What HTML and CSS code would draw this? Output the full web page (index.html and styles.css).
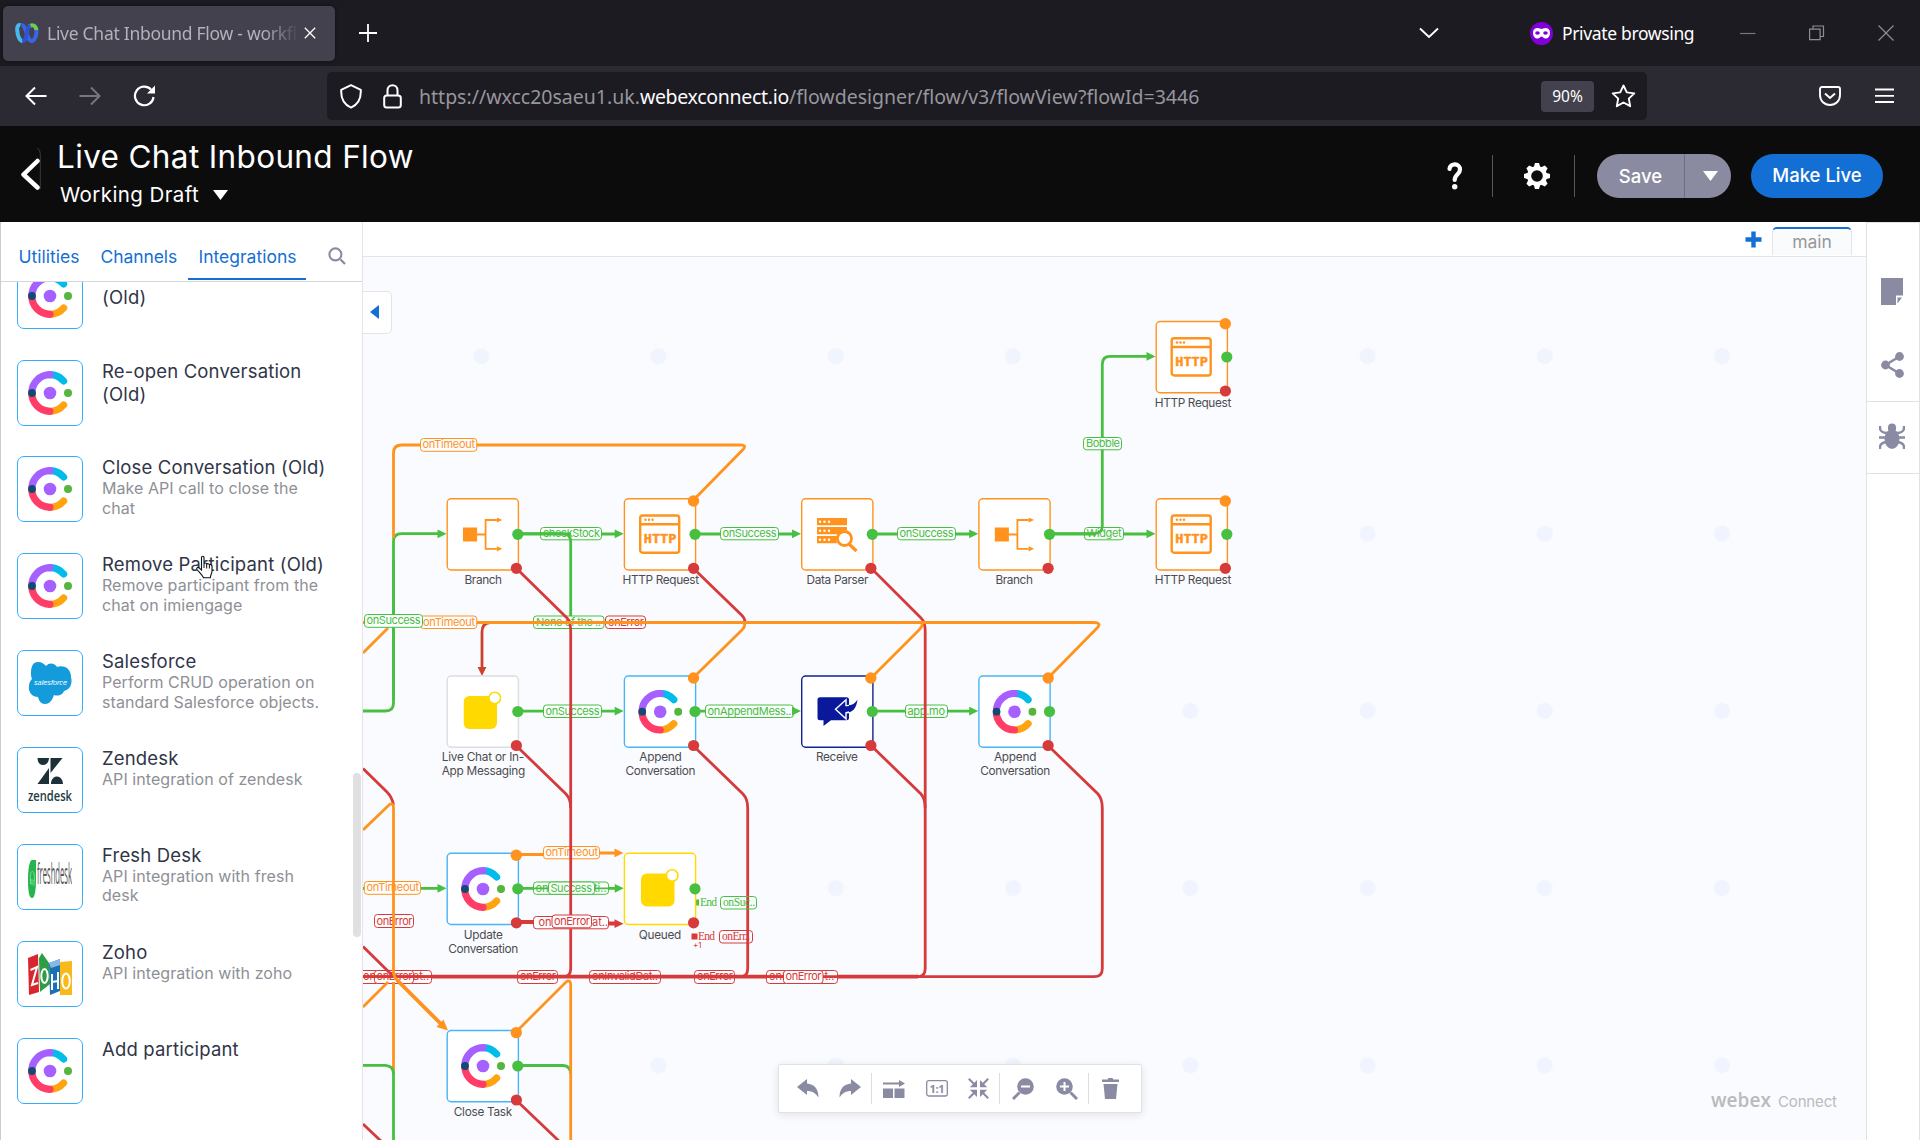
FILE: index.html
```html
<!DOCTYPE html>
<html lang="en">
<head>
<meta charset="utf-8">
<title>Live Chat Inbound Flow - workflow</title>
<link rel="stylesheet" href="styles.css">
</head>
<body>
<svg class="defs" width="0" height="0">
  <symbol id="cc" viewBox="0 0 44 44">
    <g fill="none" stroke-width="7.2" stroke-linecap="round">
      <path stroke="#00bceb" d="M22 3.7A18.3 18.3 0 0 1 35.6 10"/>
      <path stroke="#ffa30f" d="M22 40.3A18.3 18.3 0 0 0 35.6 34"/>
      <path stroke="#a560ff" d="M3.8 22A18.3 18.3 0 0 1 22 3.7"/>
      <path stroke="#ff3d67" d="M3.8 22A18.3 18.3 0 0 0 22 40.3"/>
    </g>
    <circle cx="4" cy="22" r="3.9" fill="#124a72"/><circle cx="22" cy="22" r="6.3" fill="#a560ff"/><circle cx="40" cy="22" r="4" fill="#55b53c"/>
  </symbol>
  <symbol id="http" viewBox="0 0 44 42">
    <rect x="2.2" y="1.8" width="39" height="37.2" rx="2.5" fill="none" stroke="#ff931e" stroke-width="2.4"/>
    <path d="M2 10.5H41" stroke="#ff931e" stroke-width="2.4"/>
    <g fill="#ff931e"><circle cx="7.5" cy="6" r="1.2"/><circle cx="11" cy="6" r="1.2"/><circle cx="14.5" cy="6" r="1.2"/></g>
    <text x="5.8" y="29.2" class="http-text" textLength="32.5" lengthAdjust="spacingAndGlyphs">HTTP</text>
  </symbol>
  <symbol id="branch" viewBox="0 0 40 34">
    <path d="M0 9.5h14.3v14H0z" fill="#ff931e"/>
    <path d="M14 16.5h8.5M34 2H22.8v28.8H34" fill="none" stroke="#ff931e" stroke-width="1.8"/>
    <path d="M34-.6l5.5 2.6L34 4.6zM34 28.2l5.5 2.6-5.5 2.6z" fill="#ff931e"/>
  </symbol>
  <symbol id="yellow" viewBox="0 0 40 40">
    <rect x="0" y="5" width="33.5" height="33" rx="6" fill="#ffd900"/><circle cx="31.2" cy="7" r="5.8" fill="#fff" stroke="#ffd900" stroke-width="1.6"/>
  </symbol>
  <symbol id="down" viewBox="0 0 15 10"><path d="M0 0h15L7.5 10z" fill="#fff"/></symbol>
  <symbol id="ports" viewBox="0 0 90 90" overflow="visible"><circle cx="70.6" cy="35.5" r="5.6" fill="#47bf40"/><circle cx="69.2" cy="69.5" r="5.6" fill="#d73a3a"/></symbol>
</svg>

<div class="tabstrip">
  <div class="tab">
    <svg width="24" height="20" viewBox="0 0 24 20"><g fill="none" stroke-width="4"><path stroke="#45b9ee" d="M5.500 2.200C3 1.500 2 3.500 2.200 7c.3 6 2.500 11 5.300 11"/><path stroke="#6fca5d" d="M14 3.500c3-2.500 7-1.500 7.500 4"/><path stroke="#3a65e8" d="M21.500 7c.3 6-2 11-5 11-4.500 0-5-16-10-16"/><path stroke="#2f52d8" d="M7.500 18c3.500 0 4-5 4.500-9 .4-3 1.300-5.500 3.500-6.500"/></g></svg>
    <span class="tab-title">Live Chat Inbound Flow - workfl</span>
    <svg class="tab-x" width="12" height="12" viewBox="0 0 12 12"><path d="M.8.8l10.400 10.400M11.200.8L.8 11.200" stroke="#fff" stroke-width="1.300"/></svg>
  </div>
  <svg class="newtab" width="18" height="18" viewBox="0 0 18 18"><path d="M9 0v18M0 9h18" stroke="#fff" stroke-width="1.800"/></svg>
  <svg class="tab-list" width="20" height="12" viewBox="0 0 20 12"><path d="M1 1.500l9 8.500 9-8.500" fill="none" stroke="#fff" stroke-width="1.900"/></svg>
  <div class="private">
    <svg width="23" height="23" viewBox="0 0 23 23"><circle cx="11.500" cy="11.500" r="11.500" fill="#8000d7"/><path d="M3 10.500c0-3 2-4.500 4.500-4.500 2 0 3 1 4 1s2-1 4-1c2.500 0 4.500 1.500 4.500 4.500 0 4-2 6-4.500 6-2 0-3-2-4-2s-2 2-4 2c-2.500 0-4.500-2-4.500-6z" fill="#fff"/><ellipse cx="7.500" cy="11" rx="2.300" ry="1.700" fill="#8000d7"/><ellipse cx="15.500" cy="11" rx="2.300" ry="1.700" fill="#8000d7"/></svg>
    <span>Private browsing</span>
  </div>
  <div class="win-buttons">
    <svg width="16" height="16" viewBox="0 0 16 16"><path d="M0 8.500h15.500" stroke="#77767c" stroke-width="1.200"/></svg>
    <svg width="16" height="16" viewBox="0 0 16 16"><path d="M.6 4.200h10.500v10.500H.6zM4 4V1h10.500v10.500h-3" fill="none" stroke="#8f8e94" stroke-width="1.200"/></svg>
    <svg width="16" height="16" viewBox="0 0 16 16"><path d="M.5.500l15 15M15.500.500l-15 15" stroke="#8f8e94" stroke-width="1.200"/></svg>
  </div>
</div>

<div class="navbar">
  <div class="nav-buttons">
    <svg width="22" height="20" viewBox="0 0 22 20"><path d="M21.500 10H1.500M10 1.500L1.500 10l8.500 8.500" fill="none" stroke="#fff" stroke-width="2"/></svg>
    <svg width="22" height="20" viewBox="0 0 22 20"><path d="M.5 10h20M12 1.500l8.500 8.500-8.500 8.500" fill="none" stroke="#77767e" stroke-width="2"/></svg>
    <svg width="23" height="22" viewBox="0 0 23 22"><path d="M20.500 12a9.300 9.300 0 1 1-2.500-7.500" fill="none" stroke="#fff" stroke-width="2.200"/><path d="M22 .5v8h-8z" fill="#fff"/></svg>
  </div>
  <div class="urlbar">
    <svg class="shield" width="22" height="25" viewBox="0 0 22 25"><path d="M11 1.200l9.800 4.600c.4 8.500-3 15-9.800 17.800C4.200 20.800.8 14.300 1.200 5.800z" fill="none" stroke="#fff" stroke-width="2" stroke-linejoin="round"/></svg>
    <svg class="lock" width="19" height="25" viewBox="0 0 19 25"><rect x="1.200" y="11.500" width="16.600" height="12" rx="2.500" fill="none" stroke="#fff" stroke-width="2"/><path d="M4.500 11V6.500c0-7 10-7 10 0V11" fill="none" stroke="#fff" stroke-width="2"/></svg>
    <span class="url">https://wxcc20saeu1.uk.<b>webexconnect.io</b>/flowdesigner/flow/v3/flowView?flowId=3446</span>
    <span class="zoom">90%</span>
    <svg class="star" width="25" height="24" viewBox="0 0 25 24"><path d="M12.500 1.500l3.300 6.900 7.500 1-5.500 5.200 1.400 7.600-6.700-3.700-6.700 3.700 1.400-7.600L1.700 9.400l7.500-1z" fill="none" stroke="#fff" stroke-width="1.900" stroke-linejoin="round"/></svg>
  </div>
  <svg class="pocket" width="22" height="20" viewBox="0 0 22 20"><path d="M3 1h16c1.200 0 2 .8 2 2v6c0 6-4.500 10-10 10S1 15 1 9V3c0-1.200.8-2 2-2z" fill="none" stroke="#fff" stroke-width="1.900"/><path d="M6 7.500l5 4.500 5-4.500" fill="none" stroke="#fff" stroke-width="2"/></svg>
  <svg class="burger" width="19" height="16" viewBox="0 0 19 16"><path d="M0 1.500h19M0 7.800h19M0 14h19" stroke="#fff" stroke-width="1.800"/></svg>
</div>

<header class="app-header">
  <svg class="back" width="21" height="42" viewBox="0 0 21 42"><path d="M17 0q3.300 1 3.300 6v35" fill="none" stroke="#3a3a3a"/><path d="M17.500 13L3.500 26.500l14 13" fill="none" stroke="#fff" stroke-width="4.500" stroke-linecap="round" stroke-linejoin="round"/></svg>
  <div class="titles">
    <h1>Live Chat Inbound Flow</h1>
    <div class="draft"><span>Working Draft</span><svg width="15" height="10"><use href="#down"/></svg></div>
  </div>
  <div class="actions">
    <span class="help"><svg width="16" height="28" viewBox="0 0 16 28"><path d="M2.500 7C3 .8 13 .8 13 7.500c0 5-5.300 4.500-5.300 10.500" fill="none" stroke="#fff" stroke-width="4.200" stroke-linecap="round"/><circle cx="7.700" cy="24.800" r="2.700" fill="#fff"/></svg></span>
    <span class="gear"><svg width="26" height="26" viewBox="-13 -13 26 26"><g fill="#fff"><path id="tooth" d="M-2-13h4l1.200 4v18L2 13h-4l-1.200-4V-9z"/><use href="#tooth" transform="rotate(45)"/><use href="#tooth" transform="rotate(90)"/><use href="#tooth" transform="rotate(135)"/><circle r="10"/></g><circle r="5.800" fill="#0c0c0c"/></svg></span>
    <div class="save"><span>Save</span><i><svg width="15" height="10"><use href="#down"/></svg></i></div>
    <div class="live">Make Live</div>
  </div>
</header>

<main>
  <aside class="sidebar">
    <nav class="side-tabs">
      <span class="t1">Utilities</span><span class="t2">Channels</span><span class="t3">Integrations</span>
      <svg width="18" height="18" viewBox="0 0 18 18"><circle cx="7.400" cy="7.400" r="6" fill="none" stroke="#8a8ba3" stroke-width="2.100"/><path d="M12.500 12.500l4.500 4.500" stroke="#8a8ba3" stroke-width="2.300"/></svg>
    </nav>
    <div class="list">
      <div class="item first"><div class="ico"><svg width="44" height="44"><use href="#cc"/></svg></div><div class="txt"><h3>(Old)</h3></div></div>
      <div class="item"><div class="ico"><svg width="44" height="44"><use href="#cc"/></svg></div><div class="txt"><h3>Re-open Conversation<br>(Old)</h3></div></div>
      <div class="item"><div class="ico"><svg width="44" height="44"><use href="#cc"/></svg></div><div class="txt"><h3>Close Conversation (Old)</h3><p>Make API call to close the<br>chat</p></div></div>
      <div class="item"><div class="ico"><svg width="44" height="44"><use href="#cc"/></svg></div><div class="txt"><h3>Remove Participant (Old)</h3><p>Remove participant from the<br>chat on imiengage</p></div></div>
      <div class="item"><div class="ico"><svg width="44" height="44" viewBox="0 0 44 44"><path d="M3 12C3 4 6 1 10 1c4 0 6 2 8 4 3-4 9-3 11 1 5-2 14 0 14 10 2 8-2 13-7 14-2 5-7 5-10 4-2 6-5 9-9 9s-6-3-7-7C4 36 0 31 1 25c0-4 2-6 3-7-1-2-1-4-1-6z" fill="#139bdc"/><text class="sf" x="6" y="23.500" textLength="33" lengthAdjust="spacingAndGlyphs">salesforce</text></svg></div><div class="txt"><h3>Salesforce</h3><p>Perform CRUD operation on<br>standard Salesforce objects.</p></div></div>
      <div class="item"><div class="ico"><svg width="44" height="44" viewBox="0 0 44 44"><path d="M9.500 0h11.500c0 4-2.500 7-6 7S9.500 4 9.500 0zM22.500 0h12L22.500 15zM21 10v16H9.500zM23 26c0-5 3-7.500 6-7.500s6 3 6 7.500z" fill="#1c3038"/><text class="zd" x="0" y="43" textLength="44" lengthAdjust="spacingAndGlyphs">zendesk</text></svg></div><div class="txt"><h3>Zendesk</h3><p>API integration of zendesk</p></div></div>
      <div class="item"><div class="ico"><svg width="44" height="44" viewBox="0 0 44 44"><path d="M8 5v18c0 12-1 20-4 20S0 36 0 24 2 5 4 5z" fill="#24b64e"/><path d="M2.300 26v-5c0-6 4-6 4 0v5M2.500 24v5h1.500v-5M6 25v5H4.500" fill="none" stroke="#8ee0a3" stroke-width=".8"/><text class="fd" transform="translate(9 28.500) scale(1 2.700)" textLength="35" lengthAdjust="spacingAndGlyphs">freshdesk</text></svg></div><div class="txt"><h3>Fresh Desk</h3><p>API integration with fresh<br>desk</p></div></div>
      <div class="item"><div class="ico"><svg width="44" height="44" viewBox="0 0 44 44"><path d="M0 6l10-4 1 38-10 3z" fill="#d9262e"/><path d="M11 6l3-5 7 10 1 21-10 8z" fill="#2e9e45"/><path d="M21 11l11-4v32l-10 4z" fill="#1c6eb5"/><path d="M21 11l11-4v6l-9 3z" fill="#86b9e4"/><path d="M32 10l12-1v34H32z" fill="#f9b91b"/><g fill="none" stroke="#fff" stroke-width="2"><path d="M2.500 18l6.500-3-5 18 6-2M24 22v16M30 20v17M24 30l6-1"/><ellipse cx="16.500" cy="24" rx="3.200" ry="7"/><ellipse cx="38" cy="29" rx="3.800" ry="7.500"/></g></svg></div><div class="txt"><h3>Zoho</h3><p>API integration with zoho</p></div></div>
      <div class="item"><div class="ico"><svg width="44" height="44"><use href="#cc"/></svg></div><div class="txt"><h3>Add participant</h3></div></div>
    </div>
    <div class="thumb"></div>
    <svg class="cursor" width="20" height="25" viewBox="0 0 20 25"><path d="M6.500 15V2.500C6.500.8 9 .8 9 2.500V9c.2-1.500 2.500-1.300 2.700.3.500-1 2.500-.9 2.700.7.500-.9 2.600-.5 2.600 1.300v5c0 2-1.500 3.500-1.700 6.500H8.500C7.500 20.500 4 17 2 14.500c-1-1.500.7-2.700 2-1.700z" fill="#fff" stroke="#111" stroke-width="1.100"/><path d="M9 9v4M11.700 9.500v4M14.400 10.500v3" stroke="#111"/></svg>
  </aside>

  <section class="work">
    <div class="flow-tabs">
      <svg width="17" height="17" viewBox="0 0 17 17"><path d="M6.300.500h4.400v5.800h5.800v4.400h-5.800v5.800H6.300v-5.800H.500V6.300h5.800z" fill="#136fd3"/></svg>
      <span class="main-tab">main</span>
    </div>
    <div class="canvas">
      <svg class="flow" width="1503" height="883" viewBox="363 257 1503 883">
        <defs>
          <pattern id="dots" patternUnits="userSpaceOnUse" x="392.700" y="267.600" width="177.250" height="177.300"><circle cx="88.600" cy="88.600" r="8" fill="#f0f4fe"/></pattern>
        </defs>
        <rect x="363" y="257" width="1503" height="883" fill="url(#dots)"/>
        <g class="lab g">
          <rect x="533.500" y="616" width="70.500" height="12.500" rx="3"/><text x="536" y="626" textLength="65">None of the ..</text>
        </g>
        <g class="lab r">
          <rect x="605.500" y="616" width="40" height="12.500" rx="3"/><text x="608" y="626" textLength="36">onError</text>
          <rect x="374.500" y="914.500" width="39" height="13" rx="3"/><text x="376.500" y="924.500" textLength="36">onError</text>
          <rect x="350" y="970.500" width="81.500" height="13" rx="3"/><text x="363" y="980.300">on</text><text x="413" y="980.300">at..</text>
          <rect x="374.500" y="970.500" width="39" height="13" rx="3"/><text x="376.500" y="980.300" textLength="36">onError</text>
          <rect x="517.500" y="970.500" width="40" height="13" rx="3"/><text x="520" y="980.300" textLength="36">onError</text>
          <rect x="589.500" y="970.500" width="71" height="13" rx="3"/><text x="592" y="980.300" textLength="66">onInvalidDat..</text>
          <rect x="694.500" y="970.500" width="40" height="13" rx="3"/><text x="697" y="980.300" textLength="36">onError</text>
          <rect x="766.500" y="970.500" width="71" height="13" rx="3"/><text x="769" y="980.300">onI</text><text x="824.500" y="980.300">t..</text>
        </g>
        <g class="lab g">
          <rect x="540.500" y="527.500" width="61" height="12.300" rx="3"/><text x="543" y="537.300" textLength="57">checkStock</text>
          <rect x="1084.500" y="527.500" width="39" height="12.300" rx="3"/><text x="1086.500" y="537.300" textLength="35">Widget</text>
        </g>
        <g class="edge g">
          <path d="M518 534H571M601 534H617M695 534H795M872 534H972M1048 534H1096M1124 534H1149"/>
          <path d="M518 711.200H617M695 711.200H795M872 711.200H972M518 888.300H617M363 888.300H440M518 1065.500H563Q570.700 1066 570.700 1074"/>
          <path d="M518 533.700H563Q570.700 534 570.700 542V616"/>
          <path d="M1048 533.700H1094Q1102.300 533 1102.300 526V364.300Q1102.300 356.300 1110 356.300H1149"/>
        </g>
        <g class="lab g">
          <rect x="720.500" y="527.500" width="58" height="12.300" rx="3"/><text x="722.500" y="537.300" textLength="54">onSuccess</text>
          <rect x="897.500" y="527.500" width="58" height="12.300" rx="3"/><text x="899.500" y="537.300" textLength="54">onSuccess</text>
          <rect x="1083.500" y="437.500" width="38" height="12.300" rx="3"/><text x="1086" y="447.300" textLength="34">Bobble</text>
          <rect x="543.500" y="705" width="58" height="12.500" rx="3"/><text x="545.500" y="714.500" textLength="54">onSuccess</text>
          <rect x="905.500" y="705" width="42" height="12.500" rx="3"/><text x="907.500" y="714.500" textLength="37.500">app.mo</text>
          <rect x="705.500" y="705" width="88" height="12.500" rx="3"/><text x="707.500" y="714.500" textLength="84">onAppendMess..</text>
          <rect x="533.500" y="882" width="75" height="12.300" rx="3"/><text x="535.500" y="891.500">on</text><text x="594" y="891.500">ti..</text>
        </g>
        <g class="edge thin g"><path d="M534 888.300h16M594 888.300h14"/></g>
        <g class="lab g"><rect x="548.500" y="882" width="46" height="12.300" rx="3"/><text x="550.500" y="891.500" textLength="41.500">Success</text></g>
        <g class="lab o">
          <rect x="364.300" y="881.500" width="56.200" height="12.800" rx="3"/>
          <rect x="543.500" y="846.500" width="56" height="12.300" rx="3"/><text x="545.500" y="856.200" textLength="52.500">onTimeout</text>
        </g>
        <g class="edge g"><path d="M363 711H385.500Q393.500 711 393.500 703V541.700Q393.500 533.700 401.500 533.700H440"/></g>
        <g class="edge r">
          <path d="M516 568L567 618Q570.700 622 570.700 631V968.700Q570.700 976.700 563 976.700"/>
          <path d="M516 745.500L566 794Q570.700 799 570.700 808"/>
          <path d="M693 568L742 615.500Q747 621 743 623"/>
          <path d="M693 745.500L743 794Q747.700 799 747.700 808V968.700Q747.700 976.700 740 976.700"/>
          <path d="M871 568L921 618Q925.200 622 925.200 631V968.700Q925.200 976.700 917 976.700"/>
          <path d="M871 745.500L921 794Q925.200 799 925.200 808"/>
          <path d="M1048 745.500L1098 794Q1102.300 799 1102.300 808V968.700Q1102.300 976.700 1094 976.700H363"/>
          <path d="M363 768.500L387 792Q392 797 393.500 805M363 946.500L394 977M363 1124L382 1142M516 1100L560 1142"/>
          <path class="wide" d="M431 976.700H767M837 976.700H918M516 922H536M608 923.500H618"/>
          <path d="M363 976.700H431M767 976.700h17"/>
        </g>
        <path d="M490 622.500Q482 623 482 632V670" fill="none" stroke="#c9432f" stroke-width="2.800"/>
        <path d="M477.600 667h8.800L482 676z" fill="#c9432f"/>
        <g class="edge o">
          <path d="M393.500 538V453Q393.500 445 401.500 445H741Q746.500 445 743.500 449L693 500.500"/>
          <path d="M476 622.500H1094Q1101 622.500 1098 627L1048 678M744 623Q746 626 742 630L693 678M922 623Q923 626 919 630L871 678"/>
          <path d="M363 653L388 628M363 622.500H420"/>
          <path d="M363 830L389 805Q393.500 802 393.500 808V972Q394 977 397 980L441 1024"/>
          <path class="wide" d="M397 980L441 1024"/>
          <path d="M363 1007L388 982M393.500 982V1074"/>
          <path d="M516 1032L566 982Q570.700 979 570.700 985V1140"/>
          <path d="M516 854.500H544M599 853H617"/>
        </g>
        <g class="edge g"><path d="M363 1065.400H385.500Q393.500 1066 393.500 1074V1140M393.500 560V700"/></g>
        <g fill="#47bf40"><path id="ah" d="M437.500 529.400v8.800l9-4.400z"/><use href="#ah" x="177.200"/><use href="#ah" x="354.500"/><use href="#ah" x="531.700"/><use href="#ah" x="709"/><use href="#ah" x="709" y="-177.400"/><use href="#ah" x="177.200" y="177.300"/><use href="#ah" x="354.500" y="177.300"/><use href="#ah" x="531.700" y="177.300"/><use href="#ah" y="354.500"/><use href="#ah" x="177.200" y="354.500"/></g>
        <path d="M614.500 848.500v8.800l9-4.400z" fill="#ff931e"/><path d="M614.500 919.300v8.800l9-4.400z" fill="#d73a3a"/>
        <path d="M436.500 1027l7-7.500 4.500 11z" fill="#ff931e"/>
        <g class="lab o">
          <rect x="420.500" y="438.500" width="56.300" height="12.800" rx="3"/><text x="422.500" y="448.300" textLength="52.500">onTimeout</text>
          <rect x="420.500" y="616" width="56.300" height="12.500" rx="3"/><text x="423" y="625.500" textLength="52">onTimeout</text>
          <text x="366.500" y="891.200" textLength="52.500">onTimeout</text>
        </g>
        <g class="lab g"><rect x="364.500" y="614.500" width="58" height="12.800" rx="3"/><text x="366.500" y="624.300" textLength="54">onSuccess</text></g>
        <g class="lab r">
          <rect x="533.500" y="916.500" width="75" height="12.300" rx="3"/><text x="538.500" y="925.500">on</text><text x="592" y="925.500">at..</text>
          <rect x="552" y="915" width="39.500" height="12.800" rx="3"/><text x="554" y="924.500" textLength="36">onError</text>
          <rect x="783.500" y="970.500" width="39.500" height="13" rx="3"/><text x="785.500" y="980.300" textLength="36">onError</text>
        </g>
        <g class="end g"><path d="M693 899.500h6v6h-6z"/><text x="700" y="906" textLength="17">End</text><rect x="720.500" y="896.500" width="36" height="12.500" rx="3"/><text x="723" y="906" textLength="32">onSuc..</text></g>
        <g class="end r"><path d="M691.500 933.500h6v6h-6z"/><text x="698" y="940.200" textLength="17">End</text><rect x="719.500" y="930.500" width="33" height="12.500" rx="3"/><text x="722" y="940.200" textLength="28">onErr..</text></g>
        <text class="plus1" x="693" y="948">+1</text>

        <g class="box">
          <rect class="bo" x="1156.200" y="321.500" width="71.200" height="71.200" rx="4"/>
          <rect class="bo" x="1156.200" y="498.800" width="71.200" height="71.200" rx="4"/>
          <rect class="bo" x="447.200" y="498.800" width="71.200" height="71.200" rx="4"/>
          <rect class="bo" x="624.400" y="498.800" width="71.200" height="71.200" rx="4"/>
          <rect class="bo" x="801.700" y="498.800" width="71.200" height="71.200" rx="4"/>
          <rect class="bo" x="978.900" y="498.800" width="71.200" height="71.200" rx="4"/>
          <rect class="bg" x="447.200" y="676" width="71.200" height="71.200" rx="4"/>
          <rect class="bb" x="624.400" y="676" width="71.200" height="71.200" rx="4"/>
          <rect class="bn" x="801.700" y="676" width="71.200" height="71.200" rx="4"/>
          <rect class="bb" x="978.900" y="676" width="71.200" height="71.200" rx="4"/>
          <rect class="bb" x="447.200" y="853.300" width="71.200" height="71.200" rx="4"/>
          <rect class="by" x="624.400" y="853.300" width="71.200" height="71.200" rx="4"/>
          <rect class="bb" x="447.200" y="1030.500" width="71.200" height="71.200" rx="4"/>
        </g>
        <use href="#http" x="1169.500" y="336.500" width="44" height="42"/><use href="#http" x="1169.500" y="513.700" width="44" height="42"/><use href="#http" x="638" y="513.700" width="44" height="42"/>
        <use href="#branch" x="462.800" y="518" width="40" height="34"/><use href="#branch" x="994.600" y="518" width="40" height="34"/>
        <g fill="#ff931e"><path d="M817 518h30v7.200h-30zM817 527h30v3a11 11 0 0 0-9 4.200h-21zM817 536h20a11 11 0 0 0 0 7.200h-20z"/><path d="M849.500 544.500l7 6.500" stroke="#ff931e" stroke-width="3.200"/><circle cx="844.500" cy="538.500" r="7" fill="#fff" stroke="#ff931e" stroke-width="2.800"/></g>
        <g fill="#fff"><circle id="d" cx="820" cy="521.700" r="1.200"/><use href="#d" x="4.500"/><use href="#d" x="9"/><use href="#d" y="9"/><use href="#d" x="4.500" y="9"/><use href="#d" x="9" y="9"/><use href="#d" y="18"/><use href="#d" x="4.500" y="18"/><use href="#d" x="9" y="18"/></g>
        <path d="M820 697.300h26.500q2.500 0 2.500 2.500v18q0 2.500-2.500 2.500H831l-7.500 5.800v-5.800h-3.500q-2.500 0-2.500-2.500v-18q0-2.500 2.500-2.500z" fill="#0a189b"/>
        <path d="M846 699.800l-10.500 9.500 10.500 9.500v-6c6-.5 10-4 11.500-13-3 4-6 6-11.500 5.800z" fill="#0a189b" stroke="#fff" stroke-width="1.400"/><path d="M849 705.300c4-.5 6-2 8.500-5.500-1 7-3.500 11.500-8.500 12.500z" fill="#0a189b"/>
        <use href="#yellow" x="463.500" y="691" width="40" height="40"/><use href="#yellow" x="641" y="868.500" width="40" height="40"/>
        <use href="#cc" x="638.200" y="689.700" width="44" height="44"/><use href="#cc" x="992.500" y="689.700" width="44" height="44"/><use href="#cc" x="461" y="867" width="44" height="44"/><use href="#cc" x="461" y="1044" width="44" height="44"/>
        <g>
          <use href="#ports" x="1156.200" y="321.500" width="90" height="90"/><use href="#ports" x="1156.200" y="498.800" width="90" height="90"/>
          <use href="#ports" x="447.200" y="498.800" width="90" height="90"/><use href="#ports" x="624.400" y="498.800" width="90" height="90"/><use href="#ports" x="801.700" y="498.800" width="90" height="90"/><use href="#ports" x="978.900" y="498.800" width="90" height="90"/>
          <use href="#ports" x="447.200" y="676" width="90" height="90"/><use href="#ports" x="624.400" y="676" width="90" height="90"/><use href="#ports" x="801.700" y="676" width="90" height="90"/><use href="#ports" x="978.900" y="676" width="90" height="90"/>
          <use href="#ports" x="447.200" y="853.300" width="90" height="90"/><use href="#ports" x="624.400" y="853.300" width="90" height="90"/><use href="#ports" x="447.200" y="1030.500" width="90" height="90"/>
        </g>
        <g fill="#ff931e"><circle cx="1225.300" cy="323.700" r="5.700"/><circle cx="1225.300" cy="501" r="5.700"/><circle cx="693.500" cy="501" r="5.700"/><circle cx="693.500" cy="678" r="5.700"/><circle cx="870.800" cy="678" r="5.700"/><circle cx="1048.200" cy="678" r="5.700"/><circle cx="516.300" cy="855.300" r="5.700"/><circle cx="516.300" cy="1032.600" r="5.700"/></g>
        <g class="name">
          <text x="1193" y="406.800" textLength="76.500">HTTP Request</text><text x="1193" y="584" textLength="76.500">HTTP Request</text>
          <text x="483.300" y="584" textLength="37.500">Branch</text><text x="660.800" y="584" textLength="76.500">HTTP Request</text><text x="837.500" y="584" textLength="62">Data Parser</text><text x="1014.200" y="584" textLength="37.500">Branch</text>
          <text x="483" y="761" textLength="82.500">Live Chat or In-</text><text x="483.500" y="774.800" textLength="83.500">App Messaging</text>
          <text x="660.500" y="761" textLength="42.500">Append</text><text x="660.500" y="774.800" textLength="70">Conversation</text><text x="837" y="761" textLength="42">Receive</text>
          <text x="1015.200" y="761" textLength="42.500">Append</text><text x="1015.200" y="774.800" textLength="70">Conversation</text>
          <text x="483.300" y="939" textLength="39">Update</text><text x="483.300" y="952.800" textLength="70">Conversation</text><text x="660" y="939" textLength="42.500">Queued</text><text x="483" y="1116" textLength="58.500">Close Task</text>
        </g>
        <text class="wx" x="1711" y="1106.500" textLength="60">webex</text><text class="wc" x="1778" y="1106.500" textLength="59">Connect</text>
      </svg>
      <div class="collapse"><svg width="9" height="14" viewBox="0 0 9 14"><path d="M9 0v14L0 7z" fill="#136fd3"/></svg></div>
      <div class="tools">
        <span><svg width="22" height="20" viewBox="0 0 22 20"><path d="M0 8L10 0v4.500c7 .5 11.500 5 11.500 14C18.500 14 15 12 10 12v4z"/></svg></span>
        <span class="sep"><svg width="22" height="20" viewBox="0 0 22 20"><path d="M22 8L12 0v4.500C5 5 .5 9.500.5 18.500 3.500 14 7 12 12 12v4z"/></svg></span>
        <span><svg width="22" height="18" viewBox="0 0 22 18"><path d="M0 8.500h10V18H0zM11.500 8.500h10V18h-10zM0 2.500h16V0l6 3.500L16 7V4.600H0z"/></svg></span>
        <span><svg width="22" height="17" viewBox="0 0 22 17"><rect x=".7" y=".7" width="20.600" height="15.300" rx="2" fill="none" stroke="#8a8ba3" stroke-width="1.300"/><text x="3.500" y="12.500" textLength="15" class="one">1:1</text></svg></span>
        <span class="sep"><svg width="21" height="21" viewBox="0 0 21 21"><g id="q"><path d="M9 2v7.200H1.800z"/><path d="M.8.800l5 5" stroke="#8a8ba3" stroke-width="2"/></g><use href="#q" transform="matrix(-1 0 0 1 21 0)"/><use href="#q" transform="matrix(1 0 0 -1 0 21)"/><use href="#q" transform="rotate(180 10.500 10.500)"/></svg></span>
        <span><svg width="22" height="22" viewBox="0 0 22 22"><circle cx="13.500" cy="8.500" r="8.300"/><path d="M7.500 14.500l-6.500 6.500" stroke="#8a8ba3" stroke-width="3"/><path d="M9 8.500h9" stroke="#fff" stroke-width="2"/></svg></span>
        <span class="sep"><svg width="22" height="22" viewBox="0 0 22 22"><circle cx="8.500" cy="8.500" r="8.300"/><path d="M14.500 14.500l6.500 6.500" stroke="#8a8ba3" stroke-width="3"/><path d="M4 8.500h9M8.500 4v9" stroke="#fff" stroke-width="2"/></svg></span>
        <span><svg width="17" height="21" viewBox="0 0 17 21"><path d="M0 1.500h5.500l1-1.500h4l1 1.500H17V4H0zM1.500 6h14l-1.500 15H3z"/></svg></span>
      </div>
    </div>
  </section>

  <aside class="rail">
    <div class="r1"><svg width="22" height="27" viewBox="0 0 22 27"><path d="M0 0h22v17.500h-7V27H0zM16.500 19.500H21l-4.500 6z"/></svg></div>
    <div class="r2"><svg width="23" height="26" viewBox="0 0 23 26"><path d="M18.500 4.500L4.500 13l14 8.500" fill="none" stroke="#8a8ba3" stroke-width="2.600"/><circle cx="18.500" cy="4.500" r="4.400"/><circle cx="4.500" cy="13" r="4.400"/><circle cx="18.500" cy="21.500" r="4.400"/></svg></div>
    <div class="r3"><svg width="26" height="26" viewBox="0 0 26 26"><ellipse cx="13" cy="16" rx="7.500" ry="10"/><path d="M9 7V4.500a4 4 0 0 1 8 0V7z"/><path d="M1 3v2c0 3 3 5 7 5M25 3v2c0 3-3 5-7 5M0 14.500h8M26 14.500h-8M1 26v-2c0-3 3-4.500 7-5M25 26v-2c0-3-3-4.500-7-5" fill="none" stroke="#8a8ba3" stroke-width="2.400"/></svg></div>
  </aside>
</main>
</body>
</html>
```
FILE: styles.css
```css
* { box-sizing: border-box; }
body { margin: 0; width: 1920px; height: 1140px; overflow: hidden; display: flex; flex-direction: column; font-family: "Inter", sans-serif; background: #fff; }
svg { display: block; flex: none; }
.defs { position: absolute; }
h1, h3, p { margin: 0; font-weight: 400; }

/* browser chrome */
.tabstrip { height: 66px; background: #1c1b22; display: flex; align-items: center; font-family: "Noto Sans", sans-serif; }
.tab { width: 332px; height: 55px; margin: 0 0 0 3px; padding: 0 18px 0 12px; background: #42414d; border-radius: 5px; display: flex; align-items: center; box-shadow: 0 0 4px #0008; }
.tab-title { width: 252px; margin-left: 8px; overflow: hidden; white-space: nowrap; font-size: 17.500px; letter-spacing: -.28px; color: #b3b2b9; -webkit-mask-image: linear-gradient(90deg, #000 86%, transparent); mask-image: linear-gradient(90deg, #000 86%, transparent); }
.tab-x { margin-left: 5px; }
.newtab { margin-left: 24px; }
.tab-list { margin-left: 1042px; }
.private { margin-left: 91px; width: 167px; display: flex; align-items: center; gap: 9px; color: #fff; font-size: 17.500px; letter-spacing: -.35px; white-space: nowrap; }
.win-buttons { margin-left: 43px; display: flex; gap: 53px; }
.navbar { height: 60px; background: #2b2a33; display: flex; align-items: center; font-family: "Noto Sans", sans-serif; }
.nav-buttons { margin-left: 25px; width: 302px; display: flex; align-items: center; gap: 32px; }
.urlbar { width: 1320px; height: 48px; background: #1c1b22; border-radius: 5px; display: flex; align-items: center; padding-left: 13px; }
.lock { margin-left: 21px; }
.url { margin-left: 17px; width: 1122px; padding-top: 1px; color: #97969d; font-size: 19.500px; white-space: nowrap; }
.url b { font-weight: 400; letter-spacing: -.3px; color: #fbfbfe; }
.zoom { width: 53px; height: 31px; border-radius: 4px; background: #42414d; color: #fff; font-size: 15.500px; line-height: 31px; text-align: center; }
.star { margin-left: 17px; }
.pocket { margin-left: 172px; }
.burger { margin-left: 34px; }

/* application header */
.app-header { height: 96px; background: #0c0c0c; color: #fff; display: flex; align-items: flex-start; }
.back { margin: 22px 0 0 20px; }
.titles { margin-left: 16px; }
h1 { margin-top: 11px; font-size: 31.500px; letter-spacing: .35px; line-height: 40px; white-space: nowrap; }
.draft { margin: 5px 0 0 3px; display: flex; align-items: center; gap: 14px; font-size: 20.500px; letter-spacing: .42px; line-height: 26px; }
.actions { margin: 28px 37px 0 auto; height: 44px; display: flex; align-items: center; }
.help, .gear { height: 42px; display: flex; align-items: center; border-right: 1.500px solid #58585a; }
.help { width: 46px; }
.gear { width: 82px; justify-content: center; padding-left: 6px; }
.save { margin-left: 22px; width: 134px; height: 44px; border-radius: 22px; background: #8a8ba0; display: flex; align-items: center; font-size: 18.500px; font-weight: 500; }
.save span { width: 87px; text-align: center; }
.save i { flex: 1; height: 44px; border-left: 1px solid #6c6d80; display: flex; align-items: center; padding-left: 18px; }
.live { margin-left: 20px; width: 132px; height: 44px; line-height: 43px; border-radius: 22px; background: #136fd3; font-size: 18.500px; font-weight: 500; text-align: center; }

/* workspace */
main { flex: 1; display: flex; min-height: 0; }
.sidebar { position: relative; width: 363px; display: flex; flex-direction: column; border-left: 1px solid #ccc; border-right: 1px solid #e4e4e6; background: #fff; }
.side-tabs { height: 60px; flex: none; border-bottom: 1px solid #d6d6d9; display: flex; color: #136fd3; font-size: 17.500px; line-height: 70px; white-space: nowrap; }
.t1 { margin-left: 17.500px; width: 82px; }
.t2 { width: 87.500px; letter-spacing: -.1px; }
.t3 { width: 118px; height: 58px; padding-left: 10.500px; border-bottom: 2px solid #136fd3; }
.side-tabs svg { margin: 25px 0 0 22px; }
.list { flex: 1; overflow: hidden; }
.item { height: 96.900px; display: flex; }
.first { margin-top: -19.300px; }
.first h3 { margin-top: 23px; }
.ico { margin-left: 15.500px; width: 66px; height: 66px; flex: none; border: 1.500px solid #37aefc; border-radius: 7px; display: flex; align-items: center; justify-content: center; }
.txt { margin-left: 19.500px; }
h3 { font-size: 18.500px; line-height: 23px; letter-spacing: .17px; color: #303548; white-space: nowrap; }
p { font-size: 16px; line-height: 19.300px; letter-spacing: .06px; color: #8e9096; white-space: nowrap; }
.sf { font: italic 8px "Liberation Sans", sans-serif; fill: #fff; }
.zd { font: 600 13.500px "Open Sans", sans-serif; fill: #1c3c44; }
.fd { font: 11px "Open Sans", sans-serif; fill: #555; }
.thumb { position: absolute; right: 1px; top: 551px; width: 8px; height: 164px; border-radius: 4px; background: #e0e0e2; }
.cursor { position: absolute; left: 194px; top: 333px; }

.work { width: 1503px; display: flex; flex-direction: column; }
.flow-tabs { height: 35px; flex: none; border-bottom: 1px solid #e4e4e8; display: flex; justify-content: flex-end; padding: 5px 14px 0 0; gap: 10px; }
.flow-tabs svg { margin-top: 4px; }
.main-tab { width: 80px; height: 28px; border: 1px solid #e4e4e8; border-top: 2px solid #136fd3; border-bottom: 0; border-radius: 5px 5px 0 0; background: #fafbfd; color: #97979a; font-size: 17.500px; line-height: 26px; text-align: center; }
.canvas { position: relative; flex: 1; background: #fafbfe; overflow: hidden; }
.collapse { position: absolute; left: 0; top: 34px; width: 29px; height: 43px; padding: 13px 0 0 7px; background: #fff; border: 1px solid #e4e4e8; border-left: 0; border-radius: 0 5px 5px 0; }

.g { --c: #47bf40; }
.r { --c: #d73a3a; }
.o { --c: #ff931e; }
.edge path { fill: none; stroke: var(--c); stroke-width: 2.800; }
.edge .wide { stroke-width: 3.800; }
.edge.thin path { stroke-width: 1.800; }
.lab rect { fill: #fcfdfe; stroke: var(--c); }
.lab text { font-size: 11px; fill: var(--c); }
.end rect { fill: none; stroke: var(--c); }
.end text { font: 11.500px "Liberation Serif", serif; fill: var(--c); }
.end path { fill: var(--c); }
.plus1 { font-size: 8px; fill: #d73a3a; }
.box rect { fill: #fff; stroke-width: 1.400; }
.box .bo { stroke: #ff931e; }
.box .bg { stroke: #dcdde0; }
.box .bb { stroke: #49b4f8; }
.box .bn { stroke: #12228c; }
.box .by { stroke: #ffd900; }
.name text { font-size: 11.800px; fill: #4c4c50; text-anchor: middle; }
.http-text { font: 700 12.500px "DejaVu Sans Mono", monospace; fill: #ff931e; stroke: #ff931e; stroke-width: .5; }
.wx { font: 600 19px "Open Sans", sans-serif; fill: #b9babc; }
.wc { font-size: 15px; fill: #b9babc; }

.tools { position: absolute; left: 415px; top: 807px; width: 364px; height: 49px; padding: 8px 10px 8px 8px; display: grid; grid-template-columns: 42px 43px 44px 41px 43px 45px 44px 42px; background: #fff; border: 1px solid #e2e2e6; border-radius: 2px; box-shadow: 0 2px 8px #0000001a; fill: #8a8ba3; }
.tools span { display: flex; align-items: center; justify-content: center; }
.tools .sep { border-right: 1px solid #dedee2; }
.one { font: 700 11px "Open Sans", sans-serif; fill: #8a8ba3; }

.rail { flex: 1; background: #fff; border: 1px solid #e2e2e4; border-bottom: 0; fill: #8a8ba3; display: flex; flex-direction: column; }
.rail div { padding-left: 14px; }
.r1 { height: 129px; padding-top: 55px; }
.r2 { height: 50px; border-bottom: 1px solid #e2e2e4; }
.r3 { height: 72px; padding-top: 21px; border-bottom: 1px solid #e2e2e4; }
.rail .r3 { padding-left: 12px; }
```
